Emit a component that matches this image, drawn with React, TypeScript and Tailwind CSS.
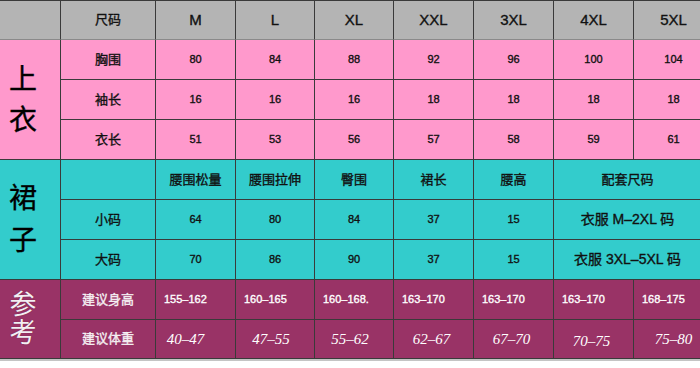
const sans = "font-['Liberation_Sans','Noto_Sans_CJK_SC',sans-serif]";
const serif = "font-['Liberation_Serif','Noto_Sans_CJK_SC',serif]";

const cell = 'flex items-center justify-center border-r border-b border-[#3a3a3a] overflow-hidden';
// the source renders with heavy ClearType strokes, so thicken a little
const heavy = '[-webkit-text-stroke:0.35px_currentColor]';

const sizes = ['M', 'L', 'XL', 'XXL', '3XL', '4XL', '5XL'];

const tops = [
  { label: '胸围', values: ['80', '84', '88', '92', '96', '100', '104'] },
  { label: '袖长', values: ['16', '16', '16', '18', '18', '18', '18'] },
  { label: '衣长', values: ['51', '53', '56', '57', '58', '59', '61'] },
];

const skirtHead = ['腰围松量', '腰围拉伸', '臀围', '裙长', '腰高'];

const skirts = [
  { label: '小码', values: ['64', '80', '84', '37', '15'], match: '衣服 M–2XL 码' },
  { label: '大码', values: ['70', '86', '90', '37', '15'], match: '衣服 3XL–5XL 码' },
];

const heights = ['155–162', '160–165', '160–168.', '163–170', '163–170', '163–170', '168–175'];
const weights = ['40–47', '47–55', '55–62', '62–67', '67–70', '70–75', '75–80'];
const weightNudge = ['pr-5', 'pr-2', 'pr-2', 'pr-1', 'pr-1', 'pr-1 pt-1', 'pr-0'];

export default function App() {
  return (
    <div className={`w-[700px] h-[368px] overflow-hidden bg-white ${sans}`}>
      <div className="w-[714px] border-t border-[#3a3a3a] grid grid-cols-[61px_95px_80px_79px_79px_80px_80px_80px_80px] grid-rows-[39px_40px_40px_40px_40px_40px_40px_40px_39px]">
        {/* header */}
        <div className={`${cell} bg-[#b4b4b4] border-b-[#8a8a8a]`}></div>
        <div className={`${cell} ${heavy} bg-[#b4b4b4] border-b-[#8a8a8a] text-[13px] text-[#111]`}>尺码</div>
        {sizes.map((s) => (
          <div key={s} className={`${cell} ${heavy} bg-[#b4b4b4] border-b-[#8a8a8a] text-[15px] text-[#111]`}>
            {s}
          </div>
        ))}

        {/* tops */}
        <div className={`${cell} ${heavy} row-span-3 bg-[#ff99cc] flex-col pr-[14px] text-[28px] leading-[41px] text-black`}>
          <span>上</span>
          <span>衣</span>
        </div>
        {tops.map((r) => (
          <>
            <div key={r.label} className={`${cell} ${heavy} bg-[#ff99cc] text-[13px] text-[#111]`}>{r.label}</div>
            {r.values.map((v, i) => (
              <div key={r.label + i} className={`${cell} ${heavy} bg-[#ff99cc] text-[11px] text-[#111]`}>
                {v}
              </div>
            ))}
          </>
        ))}

        {/* skirts */}
        <div className={`${cell} ${heavy} row-span-3 bg-[#33cccc] flex-col pr-[14px] text-[28px] leading-[42px] text-black`}>
          <span>裙</span>
          <span>子</span>
        </div>
        <div className={`${cell} bg-[#33cccc]`}></div>
        {skirtHead.map((h) => (
          <div key={h} className={`${cell} ${heavy} bg-[#33cccc] text-[13px] text-[#111]`}>{h}</div>
        ))}
        <div className={`${cell} ${heavy} col-span-2 bg-[#33cccc] text-[13px] text-[#111] pr-3`}>配套尺码</div>
        {skirts.map((r) => (
          <>
            <div key={r.label} className={`${cell} ${heavy} bg-[#33cccc] text-[13px] text-[#111]`}>{r.label}</div>
            {r.values.map((v, i) => (
              <div key={r.label + i} className={`${cell} ${heavy} bg-[#33cccc] text-[11px] text-[#111]`}>
                {v}
              </div>
            ))}
            <div className={`${cell} ${heavy} col-span-2 bg-[#33cccc] text-[14px] text-[#111] pr-3`}>{r.match}</div>
          </>
        ))}

        {/* reference */}
        <div className={`${cell} row-span-2 bg-[#993366] flex-col pr-[14px] text-[27px] leading-[28px] text-[#f3eef3] [text-shadow:0_0_1px_#5a1a3a]`}>
          <span>参</span>
          <span>考</span>
        </div>
        <div className={`${cell} ${heavy} bg-[#993366] text-[13px] text-[#f5f0f3]`}>建议身高</div>
        {heights.map((h, i) => (
          <div key={'h' + i} className={`${cell} ${heavy} bg-[#993366] justify-start pl-2 text-[11px] text-white`}>
            {h}
          </div>
        ))}
        <div className={`${cell} ${heavy} bg-[#993366] text-[13px] text-[#f5f0f3]`}>建议体重</div>
        {weights.map((w, i) => (
          <div key={'w' + i} className={`${cell} bg-[#993366] ${weightNudge[i]} ${serif} italic text-[15px] text-white`}>
            {w}
          </div>
        ))}
      </div>
      <div className="h-[2px] w-full bg-[#c4c4c4]"></div>
    </div>
  );
}
